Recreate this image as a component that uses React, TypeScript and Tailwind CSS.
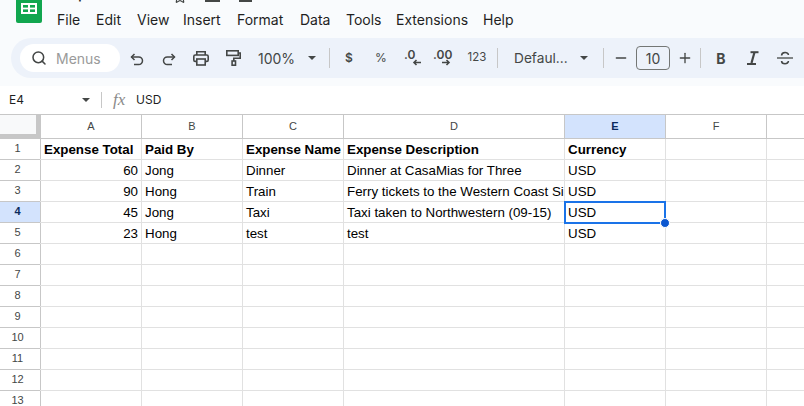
import { Search, Minus, Plus, Star } from "lucide-react";

const font = { fontFamily: '"Inter", sans-serif' };
const menus = [
  ["File", "w-[39px]"],
  ["Edit", "w-[41px]"],
  ["View", "w-[46px]"],
  ["Insert", "w-[54px]"],
  ["Format", "w-[63px]"],
  ["Data", "w-[46px]"],
  ["Tools", "w-[50px]"],
  ["Extensions", "w-[87px]"],
  ["Help", "w-[40px]"],
];
const cols = [
  ["A", "w-[101px]"],
  ["B", "w-[101px]"],
  ["C", "w-[101px]"],
  ["D", "w-[221px]"],
  ["E", "w-[101px]"],
  ["F", "w-[101px]"],
  ["", "w-[101px]"],
];
const data: string[][] = [
  ["Expense Total", "Paid By", "Expense Name", "Expense Description", "Currency"],
  ["60", "Jong", "Dinner", "Dinner at CasaMias for Three", "USD"],
  ["90", "Hong", "Train", "Ferry tickets to the Western Coast Si", "USD"],
  ["45", "Jong", "Taxi", "Taxi taken to Northwestern (09-15)", "USD"],
  ["23", "Hong", "test", "test", "USD"],
];

function Caret() {
  return <div className="w-0 h-0 border-l-[4.5px] border-r-[4.5px] border-t-[4.5px] border-l-transparent border-r-transparent border-t-[#444746]" />;
}
function Divider({ className }: { className: string }) {
  return <div className={`w-px h-[20px] bg-[#c7c7c7] shrink-0 ${className}`} />;
}
function Tool({ children }: { children: React.ReactNode }) {
  return <div className="w-[32px] h-full flex items-center justify-center shrink-0 text-[#444746]">{children}</div>;
}

export default function App() {
  return (
    <div className="w-[804px] h-[406px] overflow-hidden bg-white flex flex-col" style={{ fontFamily: '"Liberation Sans", sans-serif' }}>
      <div className="h-[86px] bg-[#f9fbfd] shrink-0 flex flex-col" style={font}>
        <div className="flex h-[38px] shrink-0">
          <div className="w-[57px] shrink-0 pl-[16px]">
            <div className="w-[26px] h-[23px] bg-[#11a64f] rounded-b-[2px] flex items-start justify-center pt-[3px]">
              <svg width="16" height="11" viewBox="0 0 16 11">
                <rect width="16" height="11" fill="#fff" />
                <rect x="2" y="2" width="5" height="2.6" fill="#11a64f" />
                <rect x="9" y="2" width="5" height="2.6" fill="#11a64f" />
                <rect x="2" y="6.4" width="5" height="2.6" fill="#11a64f" />
                <rect x="9" y="6.4" width="5" height="2.6" fill="#11a64f" />
              </svg>
            </div>
          </div>
          <div className="flex flex-col">
            <div className="h-[4px] overflow-hidden flex items-end">
              <div className="w-[116px] text-[18px] leading-[24px] text-[#1f1f1f] whitespace-nowrap">Expenses (1)</div>
              <Star size={14} className="text-[#444746] shrink-0" />
              <svg width="80" height="4" viewBox="0 0 80 4" className="ml-[16px] shrink-0">
                <rect x="2" y="0" width="15" height="2" fill="#444746" />
                <rect x="36" y="0" width="13" height="2" fill="#444746" />
              </svg>
            </div>
            <div className="flex h-[22px] mt-[4px] items-center text-[14px] text-[#1f1f1f]">
              {menus.map(([m, w]) => (
                <div key={m} className={`${w} shrink-0`}>{m}</div>
              ))}
            </div>
          </div>
        </div>
        <div className="ml-[11px] h-[40px] bg-[#edf2fa] rounded-l-[20px] flex items-center pl-[9px] text-[#444746]">
          <div className="w-[100px] h-[28px] bg-white rounded-[14px] flex items-center pl-[11px] shrink-0">
            <Search size={16} strokeWidth={2.3} className="text-[#444746]" />
            <span className="ml-[9px] text-[14px] text-[#9a9a9a]">Menus</span>
          </div>
          <div className="w-px shrink-0" />
          <Tool>
            <svg width="14" height="13" viewBox="0 0 14 13" className="mt-[2px]" fill="none" stroke="currentColor" strokeWidth="1.5">
              <path d="M4.5 1 1.5 4l3 3" />
              <path d="M1.5 4h7.2a3.8 3.8 0 0 1 0 7.6H4" />
            </svg>
          </Tool>
          <Tool>
            <svg width="14" height="13" viewBox="0 0 14 13" className="mt-[2px]" fill="none" stroke="currentColor" strokeWidth="1.5">
              <path d="M9.5 1l3 3-3 3" />
              <path d="M12.5 4H5.3a3.8 3.8 0 0 0 0 7.6H10" />
            </svg>
          </Tool>
          <Tool>
            <svg width="16" height="15" viewBox="0 0 16 15" fill="none" stroke="currentColor" strokeWidth="1.6">
              <path d="M3.8 4V0.8h8.4V4" />
              <rect x="0.8" y="4" width="14.4" height="6.4" rx="1.4" />
              <rect x="3.8" y="8" width="8.4" height="6" fill="#edf2fa" />
            </svg>
          </Tool>
          <Tool>
            <svg width="15" height="16" viewBox="0 0 15 16" fill="none" stroke="currentColor" strokeWidth="1.6">
              <rect x="0.8" y="0.8" width="11.4" height="4.6" />
              <path d="M12.2 3h2v5.2H7.8V11" />
              <rect x="6.1" y="11" width="3.4" height="4.2" />
            </svg>
          </Tool>
          <div className="w-[80px] shrink-0 flex items-center justify-between pl-[9px] pr-[13px]">
            <span className="text-[14px]">100%</span>
            <Caret />
          </div>
          <Divider className="mr-[3px]" />
          <Tool><span className="text-[12px] font-semibold">$</span></Tool>
          <Tool><span className="text-[12px]">%</span></Tool>
          <Tool>
            <svg width="24" height="20" viewBox="0 0 24 20">
              <text x="3" y="11" fontSize="12" fontWeight="600" fill="#444746" style={font}>.0</text>
              <path d="M20 14.5h-7M15.5 12l-2.5 2.5 2.5 2.5" fill="none" stroke="#444746" strokeWidth="1.6" />
            </svg>
          </Tool>
          <Tool>
            <svg width="26" height="20" viewBox="0 0 26 20">
              <text x="1" y="11" fontSize="12" fontWeight="600" fill="#444746" style={font}>.00</text>
              <path d="M10 14.5h7M14.5 12l2.5 2.5-2.5 2.5" fill="none" stroke="#444746" strokeWidth="1.6" />
            </svg>
          </Tool>
          <Tool><span className="text-[11.5px]">123</span></Tool>
          <Divider className="ml-[4px]" />
          <div className="w-[105px] shrink-0 flex items-center justify-between pl-[16px] pr-[15px]">
            <span className="text-[13.7px]">Defaul...</span>
            <Caret />
          </div>
          <Divider className="mr-px" />
          <Tool><Minus size={16} strokeWidth={2} /></Tool>
          <div className="w-[34px] h-[24px] ml-[-1px] border border-[#747775] rounded-[4px] flex items-center justify-center text-[14px] shrink-0">10</div>
          <div className="ml-[-1px]"><Tool><Plus size={16} strokeWidth={2} /></Tool></div>
          <Divider className="ml-[-1px] mr-[4px]" />
          <Tool><span className="text-[14px] font-bold">B</span></Tool>
          <Tool>
            <svg width="14" height="14" viewBox="0 0 14 14" fill="none" stroke="currentColor">
              <path d="M4.5 1.2h8" strokeWidth="2" />
              <path d="M8.5 1.2 5.5 12" strokeWidth="2.2" />
              <path d="M1 13h9" strokeWidth="2" />
            </svg>
          </Tool>
          <Tool>
            <svg width="16" height="14" viewBox="0 0 16 14" fill="none" stroke="currentColor" strokeWidth="1.6">
              <path d="M0 7h16" strokeWidth="1.3" />
              <path d="M4.6 4.6C4.6 0.6 11.4 0.6 11.4 4" />
              <path d="M4.6 10c0 3.6 6.8 3.6 6.8 0" />
            </svg>
          </Tool>
        </div>
      </div>
      <div className="h-[28px] shrink-0 flex items-center text-[12px] text-[#1f1f1f]" style={font}>
        <div className="w-[101px] shrink-0 flex items-center justify-between pl-[9px] pr-[11px]">
          <span>E4</span>
          <Caret />
        </div>
        <div className="w-px h-[16px] bg-[#c7c7c7]" />
        <span className="ml-[11px] w-[23px] text-[17px] leading-[20px] italic text-[#8a8a8a]" style={{ fontFamily: '"Liberation Serif", serif' }}>fx</span>
        <span>USD</span>
      </div>
      <div className="flex-1 min-h-0 overflow-hidden border-t border-[#c7c7c7]">
        <div className="flex h-[24px] border-b border-[#c7c7c7]">
          <div className="relative w-[41px] shrink-0 bg-[#f8f9fa] border-r border-[#c7c7c7]">
            <div className="absolute right-0 top-0 bottom-0 w-[4px] bg-[#c7c7c7]" />
            <div className="absolute left-0 right-0 bottom-0 h-[4px] bg-[#c7c7c7]" />
          </div>
          {cols.map(([c, w]) => (
            <div
              key={c}
              className={`${w} shrink-0 border-r border-[#c7c7c7] flex items-center justify-center text-[11px] ${c === "E" ? "bg-[#d3e3fd] font-bold text-[#0b2a5c]" : "text-[#444746]"}`}
            >
              {c}
            </div>
          ))}
        </div>
        {Array.from({ length: 13 }, (_, r) => {
          const row = data[r] ?? [];
          return (
            <div key={r} className="flex h-[21px] border-b border-[#e1e1e1]">
              <div className={`w-[41px] shrink-0 border-r border-[#c7c7c7] pr-[5px] pb-[2px] flex items-center justify-center text-[11px] relative ${r === 3 ? "bg-[#d3e3fd] font-bold text-[#0b2a5c]" : "text-[#444746]"}`}>
                {r + 1}
                <div className="absolute left-0 right-0 bottom-[-1px] h-px bg-[#c7c7c7]" />
              </div>
              {cols.map(([c, w], i) => (
                <div
                  key={c}
                  className={`${w} shrink-0 border-r border-[#e1e1e1] text-[13.33px] leading-[22px] text-black relative ${r === 0 ? "font-bold" : ""} ${i === 0 && r > 0 ? "text-right" : ""}`}
                >
                  <div className="h-full px-[3px] overflow-hidden whitespace-nowrap">{row[i] ?? ""}</div>
                  {r === 3 && c === "E" && (
                    <div className="absolute z-10 left-[-1px] top-[-1px] right-[-1px] bottom-[-2px] border-2 border-[#1a73e8]">
                      <div className="absolute right-[-6px] bottom-[-6px] w-[10px] h-[10px] rounded-full bg-[#0b57d0] border border-white" />
                    </div>
                  )}
                </div>
              ))}
            </div>
          );
        })}
      </div>
    </div>
  );
}
